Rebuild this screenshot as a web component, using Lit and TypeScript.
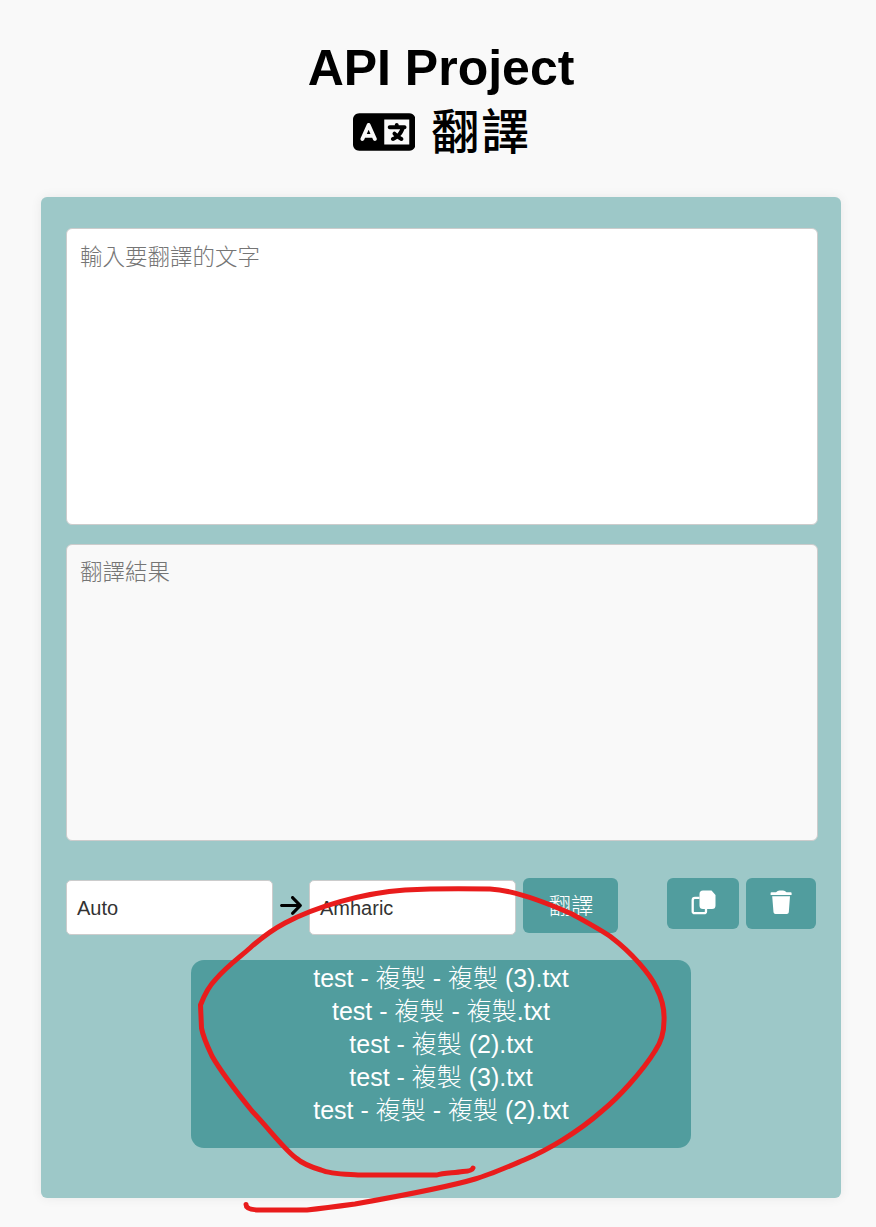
import { LitElement, html, css, svg } from "lit";
import { customElement } from "lit/decorators.js";

const LANGUAGE =
  "M0 128C0 92.7 28.7 64 64 64H256h48 16H576c35.3 0 64 28.7 64 64V384c0 35.3-28.7 64-64 64H320 304 256 64c-35.3 0-64-28.7-64-64V128zm320 0V384H576V128H320zM178.3 175.9c-3.2-7.2-10.4-11.9-18.3-11.9s-15.1 4.7-18.3 11.9l-64 144c-4.5 10.1 .1 21.9 10.2 26.4s21.9-.1 26.4-10.2l8.9-20.1h73.6l8.9 20.1c4.5 10.1 16.3 14.6 26.4 10.2s14.6-16.3 10.2-26.4l-64-144zM160 233.2L179 276H141l19-42.8zM448 164c11 0 20 9 20 20v4h44 16c11 0 20 9 20 20s-9 20-20 20h-2l-1.6 4.5c-8.9 24.4-22.4 46.6-39.6 65.4c.9 .6 1.8 1.1 2.7 1.6l18.9 11.3c9.5 5.7 12.5 18 6.9 27.4s-18 12.5-27.4 6.9l-18.9-11.3c-4.5-2.7-8.8-5.5-13.1-8.5c-10.6 7.5-21.9 14-34 19.4l-3.6 1.6c-10.1 4.5-21.9-.1-26.4-10.2s.1-21.9 10.2-26.4l3.6-1.6c6.4-2.9 12.6-6.1 18.5-9.8l-12.2-12.2c-7.8-7.8-7.8-20.5 0-28.3s20.5-7.8 28.3 0l14.6 14.6 .5 .5c12.4-13.1 22.5-28.3 29.8-45H448 376c-11 0-20-9-20-20s9-20 20-20h52v-4c0-11 9-20 20-20z";
const ARROW =
  "M438.6 278.6c12.5-12.5 12.5-32.8 0-45.3l-160-160c-12.5-12.5-32.8-12.5-45.3 0s-12.5 32.8 0 45.3L338.8 224 32 224c-17.7 0-32 14.3-32 32s14.3 32 32 32l306.7 0L233.4 393.4c-12.5 12.5-12.5 32.8 0 45.3s32.8 12.5 45.3 0l160-160z";

@customElement("app-root")
export class AppRoot extends LitElement {
  static styles = css`
    :host {
      display: block;
      position: relative;
      box-sizing: border-box;
      height: 1227px;
      overflow: hidden;
      padding: 38px 35px 0 41px;
      background: #f9f9f9;
      font-family: "Liberation Sans", "Noto Sans CJK TC", sans-serif;
      color: #000;
    }
    * { box-sizing: border-box; }
    h1 {
      margin: 0;
      height: 159px;
      font-size: 50px;
      line-height: 60px;
      font-weight: 700;
      text-align: center;
    }
    .line { display: flex; justify-content: center; }
    .sub { align-items: center; gap: 16px; height: 68px; }
    .sub svg { width: 62.5px; height: 50px; }
    .sub span {
      padding-bottom: 8px;
      font-family: "Noto Sans CJK TC", sans-serif;
      font-size: 48px;
      font-weight: 500;
      letter-spacing: 2px;
      margin-right: -2px;
    }
    .card {
      height: 1001px;
      padding: 31px 23px 0 25px;
      background: #9dc8c8;
      border-radius: 6px;
      box-shadow: 0 0 12px rgba(0, 0, 0, 0.07);
    }
    textarea {
      display: block;
      width: 752px;
      height: 297px;
      margin: 0 0 19px;
      padding: 9px 13px;
      border: 1px solid #ccc;
      border-radius: 6px;
      background: #fff;
      font: 300 22.5px/34px "Noto Sans CJK TC", sans-serif;
      resize: none;
      outline: none;
    }
    textarea::placeholder { color: #757575; opacity: 1; }
    .result { background: #f9f9f9; padding-top: 8px; }
    .controls {
      display: flex;
      align-items: flex-start;
      height: 82px;
      margin-top: 37px;
    }
    .select {
      display: flex;
      align-items: center;
      width: 207px;
      height: 55px;
      margin-top: 2px;
      padding: 2px 0 0 10px;
      border: 1px solid #ccc;
      border-radius: 5px;
      background: #fff;
      font-size: 20px;
      color: #333;
    }
    .arrow { width: 22px; height: 25px; margin: 15px 7px 0; }
    button {
      display: flex;
      align-items: center;
      justify-content: center;
      padding: 0 0 2px;
      border: 0;
      border-radius: 6px;
      background: #519d9e;
      color: #fff;
      font: 300 22.5px/30px "Noto Sans CJK TC", sans-serif;
    }
    .go { width: 95px; height: 55px; margin-left: 7px; padding: 0 0 4px 1px; }
    .copy { width: 72px; height: 51px; margin-left: 49px; }
    .trash { width: 70px; height: 51px; margin-left: 7px; }
    .files {
      width: 500px;
      height: 188px;
      margin: 0 0 0 125px;
      padding: 2px 0 0;
      list-style: none;
      border-radius: 13px;
      background: #519d9e;
      color: #fff;
      font-size: 25px;
      font-weight: 300;
      line-height: 33px;
      text-align: center;
    }
    .files li { height: 33px; }
    .pen {
      position: absolute;
      left: 0;
      top: 0;
      width: 876px;
      height: 1227px;
      pointer-events: none;
    }
  `;

  private files = [
    "test - 複製 - 複製 (3).txt",
    "test - 複製 - 複製.txt",
    "test - 複製 (2).txt",
    "test - 複製 (3).txt",
    "test - 複製 - 複製 (2).txt",
  ];

  render() {
    return html`
      <h1>
        <div class="line">API Project</div>
        <div class="line sub">
          <svg viewBox="0 0 640 512">${svg`<path d=${LANGUAGE} />`}</svg><span>翻譯</span>
        </div>
      </h1>
      <div class="card">
        <textarea placeholder="輸入要翻譯的文字"></textarea>
        <textarea class="result" placeholder="翻譯結果" readonly></textarea>
        <div class="controls">
          <div class="select">Auto</div>
          <svg class="arrow" viewBox="0 0 448 512"><path d=${ARROW} /></svg>
          <div class="select">Amharic</div>
          <button class="go">翻譯</button>
          <button class="copy" aria-label="copy">
            <svg width="26" height="26" viewBox="0 0 26 26">
              <path d="M9.500 7.800H5a2.300 2.300 0 0 0-2.300 2.300v11.300a1.800 1.800 0 0 0 1.800 1.800h9.500a2 2 0 0 0 2-2V18" fill="none" stroke="#fff" stroke-width="2.300" />
              <path d="M13 .5h8.500l4 4.500V15.500a3.500 3.500 0 0 1-3.500 3.500h-9a3.500 3.500 0 0 1-3.500-3.500V4a3.500 3.500 0 0 1 3.500-3.500z" fill="#fff" />
            </svg>
          </button>
          <button class="trash" aria-label="clear">
            <svg width="22" height="26" viewBox="0 0 22 26">
              <path d="M1.500 2.200H6Q7.500.5 9.500.5h3.500q2 0 3.500 1.700h4.200q.9 0 .9.900v2H.6v-2q0-.9.9-.9zM2.200 6.300h17.800l-1.200 16q-.2 1.700-2 1.700H5.500q-1.800 0-2-1.700z" fill="#fff" />
            </svg>
          </button>
        </div>
        <ul class="files">
          ${this.files.map((name) => html`<li>${name}</li>`)}
        </ul>
      </div>
      <svg class="pen" viewBox="0 0 876 1227" fill="none" stroke="#e91c1c" stroke-width="5" stroke-linecap="round" stroke-linejoin="round">
        <path d="M473 1168Q472 1171 463 1171.500C454 1173 443 1173 437 1175H358C342 1174 330 1174 321 1170Q304 1165 296 1158C284 1149 270 1130 252 1111C235 1090 221 1072 212 1056Q203 1037 201.500 1028L200.500 1005Q207 988 216 979C227 966 240 957 250 948Q268 932 285 923C315 907 362 893 405 890Q440 888 490 889C515 890 545 902 572 914C590 924 603 931 611 937C632 953 650 974 656 987Q665 1004 664 1021C664 1031 662 1041 655 1051C642 1072 618 1098 602 1111C578 1132 548 1150 524 1160C505 1168 489 1175 475 1179C445 1188 400 1196 355 1204C340 1206 325 1208 307 1210H260Q246 1210 246 1204.500" />
      </svg>
    `;
  }
}
